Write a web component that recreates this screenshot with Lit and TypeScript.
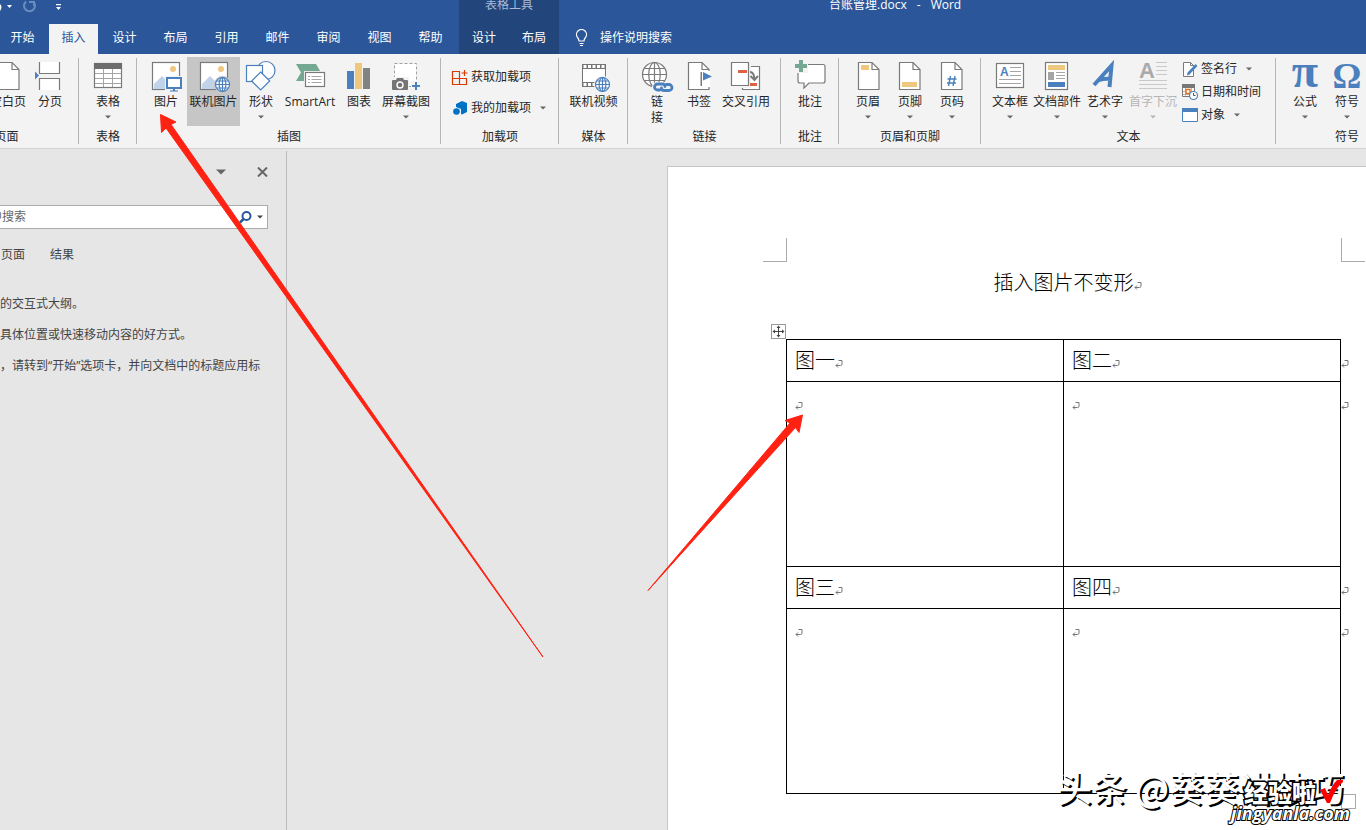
import { LitElement, html, svg, css, nothing } from "lit";
import { customElement, property } from "lit/decorators.js";

const BLUE = "#4a80bd";
const GREY = "#7a7a7a";
const GOLD = "#eec87f";
const RED = "#dd6244";

const sheet = (x: number) => svg`
  <path d="M${x} 2.5h13.5l7 7v20H${x}z" fill="#fff" stroke=${GREY} stroke-width="1.2"/>
  <path d="M${x + 13.5} 2.5v7h7" fill="none" stroke=${GREY} stroke-width="1.2"/>`;

const globe = (x: number, y: number, r: number, color: string, fill: string) => svg`
  <g fill="none" stroke=${color} stroke-width="1.2">
    <circle cx=${x} cy=${y} r=${r} fill=${fill}/>
    <ellipse cx=${x} cy=${y} rx=${r * 0.48} ry=${r}/>
    <path d="M${x} ${y - r}v${r * 2}M${x - r} ${y}h${r * 2}M${x - r * 0.86} ${y - r * 0.5}h${r * 1.72}M${x - r * 0.86} ${y + r * 0.5}h${r * 1.72}"/>
  </g>`;

const photo = svg`
  <rect x="2.5" y="2.5" width="27" height="27" fill="#fff" stroke=${GREY} stroke-width="1.2"/>
  <circle cx="23" cy="9" r="3" fill=${GOLD}/>
  <path d="M4 29v-5l8-8 6 6v7z" fill="#c0d3e8"/>`;

const icons: Record<string, unknown> = {
  blank: sheet(6.5),
  break: svg`
    <path d="M5.5 2v11.500h20V2M5.500 30V18.500h20V30" fill="#fff" stroke=${GREY} stroke-width="1.2"/>
    <path d="M1 11.500v8l4-4z" fill=${BLUE}/>`,
  table: svg`
    <rect x="2.5" y="3.500" width="27" height="24" fill="#fff" stroke=${GREY} stroke-width="1.2"/>
    <path d="M2 3h28v6H2z" fill="#6d6d6d"/>
    <path d="M3 13.500h26M3 18.500h26M3 23.500h26M11.500 9v18M20.500 9v18" stroke="#a5a5a5" fill="none"/>`,
  picture: svg`${photo}
    <path d="M15 16h18v16H15z" fill="#f3f3f3"/>
    <path d="M23 28h2v2.500h3v1h-8v-1h3z" fill=${BLUE}/>
    <rect x="17" y="18" width="14" height="10" fill="#fff" stroke=${BLUE} stroke-width="2"/>`,
  online: svg`${photo}<circle cx="24.500" cy="24.500" r="8.500" fill="#c6c6c6"/>${globe(24.5, 24.5, 7, BLUE, "#fff")}`,
  shapes: svg`<g fill="#fff" stroke=${BLUE} stroke-width="1.2">
    <circle cx="21" cy="10.500" r="9"/>
    <rect x="1.500" y="5.500" width="16" height="16"/>
    <path d="M15.700 12l9 9-9 9-9-9z"/></g>`,
  smart: svg`
    <path d="M2 4h20l5 8.500-5 8.500H2l5-8.500z" fill="#74a892"/>
    <path d="M10 11h23v18H10z" fill="#f3f3f3"/>
    <rect x="11.500" y="12.500" width="19" height="14" fill="#fff" stroke=${GREY} stroke-width="1.2"/>
    <path d="M14 16.500h2M14 19.500h2M14 22.500h2M17.500 16.500h10M17.500 19.500h10M17.500 22.500h10" stroke="#a5a5a5"/>`,
  chart: svg`
    <path d="M4 11h7v18H4z" fill=${BLUE}/><path d="M12 3h7v26h-7z" fill=${GOLD}/><path d="M20 8h7v21h-7z" fill="#828282"/>`,
  capture: svg`
    <rect x="4.500" y="3.500" width="22" height="23" fill="#fff" stroke="#a0a0a0" stroke-dasharray="3 2"/>
    <path d="M1 17h18v14H1z" fill="#f3f3f3"/>
    <path d="M2 21q0-1 1-1h3l1-2h6l1 2h3q1 0 1 1v8q0 1-1 1H3q-1 0-1-1z" fill="#757575"/>
    <circle cx="10" cy="25" r="3" fill="none" stroke="#fff" stroke-width="1.400"/>
    <path d="M21 21h11v11H21z" fill="#f3f3f3"/>
    <path d="M25 22h2v3h3v2h-3v3h-2v-3h-3v-2h3z" fill=${BLUE}/>`,
  video: svg`
    <path d="M4 4h24v23H4z" fill="#747474"/><path d="M5 9h22v13H5z" fill="#fff"/>
    <path d="M5.500 6.500h22M5.500 24.500h22" stroke="#fff" stroke-width="3" stroke-dasharray="3 1.500"/>
    <circle cx="24.500" cy="24.500" r="8.500" fill="#f3f3f3"/>${globe(24.5, 24.5, 7, BLUE, "#fff")}`,
  link: svg`${globe(13.5, 14.5, 12, GREY, "#fff")}
    <rect x="11" y="22" width="22" height="10" rx="5" fill="#f3f3f3"/>
    <g fill="none" stroke=${BLUE} stroke-width="2.800" stroke-linecap="round">
      <path d="M19 30h-2.500a3 3 0 0 1 0-6h5q2.500 0 2.500 2.500"/>
      <path d="M25.500 24.500h2.500a3 3 0 0 1 0 6h-5q-2.500 0-2.500-2.500"/></g>`,
  bookmark: svg`${sheet(5.5)}
    <path d="M17 11h10v16H17z" fill="#fff"/>
    <path d="M17.500 12H19v14h-1.500z" fill=${GREY}/><path d="M20 12l9 4.500-9 4z" fill=${BLUE}/>`,
  cross: svg`
    <path d="M12.500 6.500h17v23h-17z" fill="#fff" stroke=${GREY} stroke-width="1.2"/>
    <path d="M0 1h21v27H0z" fill="#f3f3f3"/>
    <path d="M1.500 2.500h17v23h-17z" fill="#fff" stroke=${GREY} stroke-width="1.2"/>
    <path d="M8 10h9v3H8zM20 23h7v3h-7z" fill=${RED}/>
    <path d="M20 12q4 0 4.500 7M20.500 16l4 4 3.500-4" fill="none" stroke=${GREY} stroke-width="2"/>`,
  comment: svg`
    <path d="M5 4.500h24q2 0 2 2v14.500q0 2-2 2H15l-5 5v-5H6q-2 0-2-2V6.500z" fill="#fff" stroke=${GREY} stroke-width="1.2"/>
    <path d="M0-1h14v14H0z" fill="#f3f3f3"/>
    <path d="M5 0h4v4h4v4H9v4H5V8H1V4h4z" fill="#74a892"/>`,
  header: svg`${sheet(6.5)}<path d="M9 5h8v5H9z" fill=${GOLD}/>`,
  footer: svg`${sheet(5.5)}<path d="M8 22h15v5H8z" fill=${GOLD}/>`,
  number: svg`${sheet(5.5)}<path d="M14.500 16l-2 10M19 16l-2 10M11.500 19h9M11 23h9" stroke=${BLUE} stroke-width="1.400" fill="none"/>`,
  textbox: svg`
    <rect x="2.500" y="3.500" width="27" height="24" fill="#fff" stroke=${GREY} stroke-width="1.2"/>
    <text x="6" y="16" font-family="Liberation Sans" font-weight="700" font-size="12" fill=${BLUE}>A</text>
    <path d="M16 7.500h11M16 11.500h11M16 15.500h11M5 19.500h22M5 23.500h22" stroke="#a5a5a5"/>`,
  parts: svg`
    <rect x="4.500" y="2.500" width="22" height="27" fill="#fff" stroke=${GREY} stroke-width="1.2"/>
    <path d="M7 5h17v5H7z" fill=${GOLD}/><path d="M7 12h6v8H7z" fill="#a5a5a5"/><path d="M7 22h17v5H7z" fill=${BLUE}/>
    <path d="M15 12.500h9M15 15.500h9M15 18.500h9" stroke="#a5a5a5"/>`,
  wordart: svg`<path d="M5 25L22.500 5.500l-2 21.500M10 20q6-2 12-1" fill="none" stroke=${BLUE} stroke-width="4"/>`,
  dropcap: svg`
    <text x="2" y="18" font-family="Liberation Sans" font-weight="700" font-size="22" fill="#aaa">A</text>
    <path d="M19 2.500h11M19 6.500h11M19 10.500h11M19 14.500h11M2 20.500h28M2 24.500h28M2 28.500h28" stroke="#c9c9c9"/>`,
  pi: svg`<text x="16" y="27" text-anchor="middle" font-family="Liberation Serif" font-weight="700" font-size="48" fill=${BLUE}>π</text>`,
  omega: svg`<text x="16" y="28" text-anchor="middle" font-family="Liberation Serif" font-weight="700" font-size="36" fill=${BLUE}>Ω</text>`,
};

const small: Record<string, unknown> = {
  store: svg`<path d="M.5 2.500h7v13h-7zM.5 9.500h14v6h-14M7.500 9.500v6M12.500 1v6M9.500 4h6" fill="none" stroke="#d83b01" stroke-width="1.200"/>`,
  addins: svg`<path d="M4 4l6-3 5 2v9l-5 2.500-1-.5V9L4 7z" fill="#0072c6"/><circle cx="4.500" cy="11.500" r="3.300" fill="#0072c6"/>`,
  sign: svg`<path d="M1.500 1.500h7l3 3v11h-10z" fill="#fff" stroke=${GREY}/><path d="M8.500 1.500v3h3" fill="none" stroke=${GREY}/>
    <path d="M6.500 12.500l8-8.500" stroke=${BLUE} stroke-width="2.600"/><path d="M5 14.500l.5-3 2.500 2z" fill=${BLUE}/>`,
  date: svg`<path d="M.5.500h12v12H.5z" fill="#fff" stroke=${GREY}/><path d="M0 0h13v4H0z" fill="#777"/>
    <path d="M1 7.500h12M1 10.500h12M3.500 4v8M9.500 4v8" stroke="#b5b5b5"/><path d="M4 5.500h4v4H4z" fill="#fff" stroke="#e07020" stroke-width="1.400"/>
    <circle cx="11.500" cy="11.500" r="4" fill="#fff" stroke=${BLUE} stroke-width="1.200"/><path d="M11.500 9v2.500h2" fill="none" stroke="#555"/>`,
  object: svg`<path d="M.5 1.500h15v13H.5z" fill="#fff" stroke=${BLUE}/><path d="M0 1h16v4H0z" fill=${BLUE}/>`,
};

const caret = html`<svg class="caret" viewBox="0 0 6 4" width="6" height="4" aria-hidden="true"><path d="M0 .500h6L3 3.500z" fill="currentColor"/></svg>`;

const mark = html`<svg class="mark" viewBox="0 0 8 8" width="8" height="8" aria-hidden="true">
  <path d="M3.500.500h3.500v3.500q0 1.500-1.500 1.500H1M3 3.500l-2 2 2 2" fill="none" stroke="#777"/></svg>`;

@customElement("ribbon-tool")
class RibbonTool extends LitElement {
  @property() icon = "";
  @property() label = "";
  @property({ type: Boolean }) menu = false;
  @property({ type: Boolean }) small = false;
  @property({ type: Boolean }) wrap = false;
  @property({ type: Boolean }) off = false;

  static styles = css`
    :host { display: block; flex: none; }
    button { border: 0; padding: 0; margin: 0; background: none; font: inherit; color: inherit; white-space: nowrap; display: flex; align-items: center; }
    .large { flex-direction: column; width: 100%; height: 69px; padding-top: 3px; }
    .text { line-height: 16px; margin-top: 2px; }
    .wrap { width: 12px; white-space: normal; word-break: break-all; }
    .row { gap: 3px; height: 23px; }
    .caret { color: #666; margin-top: 5px; flex: none; }
    .row .caret { margin: 0 0 0 6px; }
    button:disabled, button:disabled .caret { color: #b5b5b5; }
    .art { overflow: visible; flex: none; }
  `;

  render() {
    if (this.small) {
      return html`<button class="row"><svg class="art" viewBox="0 0 16 16" width="16" height="16" aria-hidden="true">${small[this.icon]}</svg>
        <span>${this.label}</span>${this.menu ? caret : nothing}</button>`;
    }
    return html`<button class="large" ?disabled=${this.off}>
      <svg class="art" viewBox="0 0 32 32" width="32" height="32" aria-hidden="true">${icons[this.icon]}</svg>
      <span class="text ${this.wrap ? "wrap" : ""}">${this.label}</span>${this.menu ? caret : nothing}</button>`;
  }
}

@customElement("app-root")
class AppRoot extends LitElement {
  static styles = css`
    * { box-sizing: border-box; }
    :host { display: flex; flex-direction: column; height: 100vh; min-height: 600px; overflow: hidden; position: relative;
      background: #e6e6e6; color: #262626; font: 12px/16px "Open Sans", "Noto Sans CJK SC", sans-serif; }
    button { border: 0; padding: 0; margin: 0; background: none; font: inherit; color: inherit; }
    header { display: flex; flex: none; height: 54px; background: #2b579a; color: #fff; overflow: hidden; }
    .part { display: flex; flex-direction: column; }
    .bar { height: 24px; line-height: 10px; display: flex; flex: none; }
    .quick { align-items: flex-start; }
    .quick svg { flex: none; }
    .main { width: 459px; }
    .tabs { display: flex; flex: 1; }
    .main .tabs { margin-left: -3px; }
    .tab { width: 51px; height: 30px; padding-bottom: 2px; flex: none; }
    .tab.on { width: 49px; margin: 0 1px; background: #f3f3f3; color: #2b579a; }
    .context { width: 100px; background: #22457c; }
    .context .bar { justify-content: center; color: #a9bbd6; }
    .context .tab { width: 50px; }
    .rest { flex: 1; }
    .title { padding-left: 270px; gap: 10px; white-space: nowrap; }
    .tell { display: flex; align-items: center; gap: 12px; height: 30px; padding: 0 0 2px 16px; }
    .ribbon { display: flex; flex: none; height: 95px; padding: 3px 0; background: #f3f3f3; border-bottom: 1px solid #d2d2d2; overflow: hidden; }
    .group { flex: none; display: flex; flex-direction: column; justify-content: space-between; position: relative; }
    .group::after { content: ""; position: absolute; right: 0; top: 1px; bottom: 1px; width: 1px; background: #b5b5b5; }
    .tools { display: flex; height: 69px; padding-left: 8px; }
    .tools.mid { padding: 0; justify-content: center; }
    .tools.end { justify-content: flex-end; padding-right: 9px; }
    .name { text-align: center; line-height: 16px; }
    .stack { display: flex; flex-direction: column; }
    .apps { padding: 8px 0 0 3px; gap: 8px; }
    .w36 { width: 40px; } .w42 { width: 42px; } .w44 { width: 44px; } .w52 { width: 52px; } .w56 { width: 56px; }
    .hot { width: 53px; background: #c6c6c6; }
    .g0 { width: 145px; margin-left: -66px; } .g1 { width: 58px; } .g2 { width: 304px; } .g3 { width: 118px; } .g4 { width: 69px; }
    .g5 { width: 153px; } .g8 { width: 295px; } .g9 { width: 142px; }
    .stackend { padding-left: 3px; }
    .work { display: flex; flex: 1; min-height: 0; padding-top: 2px; }
    .pane { width: 350px; margin-left: -63px; flex: none; border-right: 1px solid #bbb; padding: 12px 18px 0 12px; color: #444; }
    .panehead { display: flex; justify-content: flex-end; align-items: center; gap: 30px; height: 18px; color: #666; }
    .panehead button { display: flex; }
    .find { display: flex; align-items: center; height: 24px; margin-top: 24px; background: #fff; border: 1px solid #ababab; padding-right: 4px; }
    .find input { flex: 1; min-width: 0; border: 0; outline: 0; padding: 0 0 0 4px; font: inherit; background: none; }
    .find input::placeholder { color: #666; opacity: 1; }
    .find button { display: flex; margin-left: 5px; }
    .views { display: flex; gap: 25px; margin-top: 18px; padding-left: 3px; }
    .views button { width: 24px; white-space: nowrap; }
    .hint { margin-top: 33px; padding-left: 3px; display: flex; flex-direction: column; gap: 15px; }
    .hint p { margin: 0; }
    .canvas { flex: 1; min-width: 0; overflow: hidden; padding: 15px 0 0 380px; display: flex; }
    .page { flex: none; width: 794px; background: #fff; border: 1px solid #c6c6c6; border-bottom: 0; padding: 71px 119px 0 118px;
      font: 300 20px/42px "Noto Sans CJK SC", sans-serif; color: #000; }
    .crops { display: flex; justify-content: space-between; margin: 0 -24px 0 -23px; height: 24px; }
    .crop { width: 24px; border-bottom: 1px solid #ababab; border-right: 1px solid #ababab; }
    .crop.r { border-right: 0; border-left: 1px solid #ababab; }
    h1 { margin: 0 0 37px; font: inherit; line-height: 40px; text-align: center; position: relative; }
    .mark { position: absolute; }
    h1 .mark { top: 20px; }
    .sheet { position: relative; }
    table { border-collapse: collapse; width: 100%; table-layout: fixed; font: inherit; }
    td { border: 1px solid #000; padding: 0 8px; vertical-align: top; position: relative; height: 185px; }
    .cap td { height: 42px; line-height: 40px; }
    td .mark { top: 20px; }
    td .eol .mark { left: calc(100% + 1px); }
    .move { position: absolute; left: -15px; top: -15px; width: 15px; height: 15px; border: 1px solid #999; background: #fff; display: flex; }
    .size { position: absolute; right: -15px; bottom: -15px; width: 15px; height: 15px; border: 1px solid #aaa; background: #fff; }
    .arrows { position: absolute; left: 0; top: 0; pointer-events: none; }
    .stamp, .brand, .site { position: absolute; white-space: nowrap; color: #fff; pointer-events: none; }
    .stamp { right: 22px; bottom: 21px; font: 500 35px/44px "Noto Sans CJK SC", sans-serif; text-shadow: 2px 2px 0 #000; }
    .brand { right: 50px; bottom: 24px; font: 900 24px/28px "Noto Sans CJK SC", sans-serif; paint-order: stroke; -webkit-text-stroke: 3px #000; }
    .site { right: 16px; bottom: 6px; font: italic 700 19px/22px "Open Sans", sans-serif; font-size: 18px; paint-order: stroke; -webkit-text-stroke: 2px #000; }
    .tick { position: absolute; right: 22px; bottom: 26px; }
  `;

  private tab = (name: string, on = false) => html`<button class="tab ${on ? "on" : ""}" role="tab" aria-selected=${on}>${name}</button>`;

  private group = (cls: string, name: string, pack: string, tools: unknown) => html`
    <section class="group ${cls}" aria-label=${name}><div class="tools ${pack}">${tools}</div><div class="name">${name}</div></section>`;

  private tool = (cls: string, icon: string, label: string, menu = false) =>
    html`<ribbon-tool class=${cls} icon=${icon} label=${label} ?menu=${menu}></ribbon-tool>`;

  render() {
    const t = this.tool;
    return html`
      <header>
        <div class="part main">
          <div class="bar quick">
            <svg width="66" height="16" viewBox="0 0 66 16" aria-hidden="true">
              <path d="M0 4q3 3 0 7z" fill="#fff"/>
              <path d="M7 5h5l-2.500 3z" fill="#fff"/>
              <path d="M26 1.500a5.500 5.500 0 1 0 7 0M29 2h5v4" fill="none" stroke="#6a8bbd" stroke-width="2"/>
              <path d="M56 4h5v1.200h-5zM56 7h5l-2.500 3z" fill="#fff"/>
            </svg>
          </div>
          <div class="tabs" role="tablist">
            ${this.tab("开始")}${this.tab("插入", true)}${["设计", "布局", "引用", "邮件", "审阅", "视图", "帮助"].map((n) => this.tab(n))}
          </div>
        </div>
        <div class="part context">
          <div class="bar">表格工具</div>
          <div class="tabs" role="tablist">${this.tab("设计")}${this.tab("布局")}</div>
        </div>
        <div class="part rest">
          <div class="bar title"><span>台账管理.docx</span><span>-</span><span>Word</span></div>
          <button class="tell">
            <svg width="13" height="18" viewBox="0 0 13 18" aria-hidden="true"><path d="M4 12q0-2-1.500-3.500a5 5 0 1 1 8 0Q9 10 9 12zM4.500 14.500h4M5 16.500h3" fill="none" stroke="#fff" stroke-width="1.200"/></svg>
            <span>操作说明搜索</span>
          </button>
        </div>
      </header>

      <nav class="ribbon" aria-label="插入">
        ${this.group("g0", "页面", "end", html`${t("w44", "blank", "空白页")}${t("w36", "break", "分页")}`)}
        ${this.group("g1", "表格", "mid", t("w42", "table", "表格", true))}
        ${this.group("g2", "插图", "", html`${t("w42", "picture", "图片")}${t("hot", "online", "联机图片")}${t("w42", "shapes", "形状", true)}
          ${t("w56", "smart", "SmartArt")}${t("w42", "chart", "图表")}${t("w52", "capture", "屏幕截图", true)}`)}
        ${this.group("g3", "加载项", "", html`<div class="stack apps">
          <ribbon-tool small icon="store" label="获取加载项"></ribbon-tool>
          <ribbon-tool small menu icon="addins" label="我的加载项"></ribbon-tool></div>`)}
        ${this.group("g4", "媒体", "mid", t("w52", "video", "联机视频"))}
        ${this.group("g5", "链接", "", html`<ribbon-tool class="w42" wrap icon="link" label="链接"></ribbon-tool>${t("w42", "bookmark", "书签")}${t("w52", "cross", "交叉引用")}`)}
        ${this.group("g1", "批注", "mid", t("w42", "comment", "批注"))}
        ${this.group("g9", "页眉和页脚", "mid", html`${t("w42", "header", "页眉", true)}${t("w42", "footer", "页脚", true)}${t("w42", "number", "页码", true)}`)}
        ${this.group("g8", "文本", "", html`${t("w42", "textbox", "文本框", true)}${t("w52", "parts", "文档部件", true)}${t("w44", "wordart", "艺术字", true)}
          <ribbon-tool class="w52" off menu icon="dropcap" label="首字下沉"></ribbon-tool>
          <div class="stack stackend">
            <ribbon-tool small menu icon="sign" label="签名行"></ribbon-tool>
            <ribbon-tool small icon="date" label="日期和时间"></ribbon-tool>
            <ribbon-tool small menu icon="object" label="对象"></ribbon-tool>
          </div>`)}
        ${this.group("g9", "符号", "", html`${t("w42", "pi", "公式", true)}${t("w42", "omega", "符号", true)}`)}
      </nav>

      <div class="work">
        <aside class="pane">
          <div class="panehead">
            <button aria-label="选项"><svg width="10" height="6" viewBox="0 0 10 6"><path d="M0 .500h10l-5 5z" fill="currentColor"/></svg></button>
            <button aria-label="关闭"><svg width="12" height="10" viewBox="0 0 12 10"><path d="M2 .500l9 9M11 .500l-9 9" stroke="currentColor" stroke-width="2"/></svg></button>
          </div>
          <div class="find">
            <input type="text" aria-label="搜索" placeholder="在文档中搜索" />
            <button aria-label="查找"><svg width="13" height="13" viewBox="0 0 13 13"><circle cx="7.500" cy="5" r="4" fill="none" stroke="#2b579a" stroke-width="2"/><path d="M4.500 8L1 11.500" stroke="#2b579a" stroke-width="2.500"/></svg></button>
            <button aria-label="搜索选项">${caret}</button>
          </div>
          <div class="views"><button>标题</button><button>页面</button><button>结果</button></div>
          <div class="hint">
            <p>创建文档的交互式大纲。</p>
            <p>它是跟踪具体位置或快速移动内容的好方式。</p>
            <p>若要开始，请转到“开始”选项卡，并向文档中的标题应用标题样式。</p>
          </div>
        </aside>
        <main class="canvas">
          <article class="page">
            <div class="crops"><div class="crop"></div><div class="crop r"></div></div>
            <h1>插入图片不变形${mark}</h1>
            <div class="sheet">
              <table>
                <tr class="cap"><td>图一${mark}</td><td>图二${mark}<span class="eol">${mark}</span></td></tr>
                <tr><td>${mark}</td><td>${mark}<span class="eol">${mark}</span></td></tr>
                <tr class="cap"><td>图三${mark}</td><td>图四${mark}<span class="eol">${mark}</span></td></tr>
                <tr><td>${mark}</td><td>${mark}<span class="eol">${mark}</span></td></tr>
              </table>
              <div class="move"><svg width="13" height="13" viewBox="0 0 13 13"><path d="M6.500 2v9M2 6.500h9" stroke="#444"/><path d="M6.500.500l2 2.500h-4zM6.500 12.500l2-2.500h-4zM.5 6.500l2.500-2v4zM12.500 6.500l-2.500-2v4z" fill="#444"/></svg></div>
              <div class="size"></div>
            </div>
          </article>
        </main>
      </div>

      <svg class="arrows" width="1366" height="830" viewBox="0 0 1366 830" aria-hidden="true">
        <path d="M160.500 114.500L176 122l-5 2.500L543 657 166 128l-4.500 4.500z" fill="#ff2213" stroke="#ff2213"/>
        <path d="M802.500 415L785 420.500l5 2.500L648 590.500 795.500 427.500l3.500 5z" fill="#ff2213" stroke="#ff2213"/>
      </svg>
      <div class="stamp">头条 @葵葵讲技巧</div>
      <div class="brand">经验啦</div>
      <div class="site">jingyanla.com</div>
      <svg class="tick" width="24" height="24" viewBox="0 0 24 24" aria-hidden="true"><path d="M0 10l5-2 3 7q4-10 9-15h6v2q-7 5-13 21H7z" fill="#f00"/></svg>
    `;
  }
}
